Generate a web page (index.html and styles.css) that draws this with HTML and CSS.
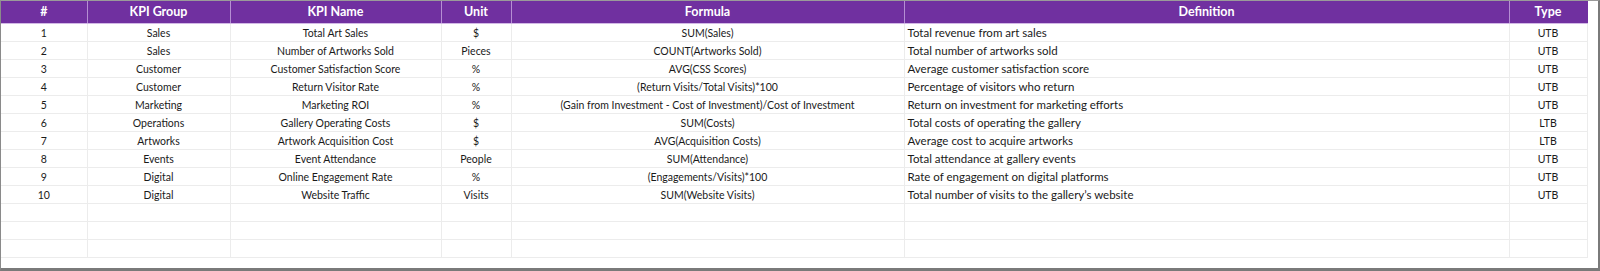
FILE: index.html
```html
<!DOCTYPE html>
<html>
<head>
<meta charset="utf-8">
<link rel="stylesheet" href="styles.css">
</head>
<body>
<div class="frame">
<table class="kpi">
<colgroup>
<col class="c-num"><col class="c-group"><col class="c-name"><col class="c-unit"><col class="c-formula"><col class="c-def"><col class="c-type">
</colgroup>
<thead>
<tr><th>#</th><th>KPI Group</th><th>KPI Name</th><th>Unit</th><th>Formula</th><th>Definition</th><th>Type</th></tr>
</thead>
<tbody>
<tr><td>1</td><td>Sales</td><td>Total Art Sales</td><td>$</td><td>SUM(Sales)</td><td class="def">Total revenue from art sales</td><td>UTB</td></tr>
<tr><td>2</td><td>Sales</td><td>Number of Artworks Sold</td><td>Pieces</td><td>COUNT(Artworks Sold)</td><td class="def">Total number of artworks sold</td><td>UTB</td></tr>
<tr><td>3</td><td>Customer</td><td>Customer Satisfaction Score</td><td>%</td><td>AVG(CSS Scores)</td><td class="def">Average customer satisfaction score</td><td>UTB</td></tr>
<tr><td>4</td><td>Customer</td><td>Return Visitor Rate</td><td>%</td><td>(Return Visits/Total Visits)*100</td><td class="def">Percentage of visitors who return</td><td>UTB</td></tr>
<tr><td>5</td><td>Marketing</td><td>Marketing ROI</td><td>%</td><td>(Gain from Investment - Cost of Investment)/Cost of Investment</td><td class="def">Return on investment for marketing efforts</td><td>UTB</td></tr>
<tr><td>6</td><td>Operations</td><td>Gallery Operating Costs</td><td>$</td><td>SUM(Costs)</td><td class="def">Total costs of operating the gallery</td><td>LTB</td></tr>
<tr><td>7</td><td>Artworks</td><td>Artwork Acquisition Cost</td><td>$</td><td>AVG(Acquisition Costs)</td><td class="def">Average cost to acquire artworks</td><td>LTB</td></tr>
<tr><td>8</td><td>Events</td><td>Event Attendance</td><td>People</td><td>SUM(Attendance)</td><td class="def">Total attendance at gallery events</td><td>UTB</td></tr>
<tr><td>9</td><td>Digital</td><td>Online Engagement Rate</td><td>%</td><td>(Engagements/Visits)*100</td><td class="def">Rate of engagement on digital platforms</td><td>UTB</td></tr>
<tr><td>10</td><td>Digital</td><td>Website Traffic</td><td>Visits</td><td>SUM(Website Visits)</td><td class="def">Total number of visits to the gallery’s website</td><td>UTB</td></tr>
<tr class="blank"><td></td><td></td><td></td><td></td><td></td><td class="def"></td><td></td></tr>
<tr class="blank"><td></td><td></td><td></td><td></td><td></td><td class="def"></td><td></td></tr>
<tr class="blank"><td></td><td></td><td></td><td></td><td></td><td class="def"></td><td></td></tr>
</tbody>
</table>
</div>
</body>
</html>
```

FILE: styles.css
```css
html, body {
  margin: 0;
  padding: 0;
  background: #ffffff;
}

.frame {
  width: 1600px;
  height: 271px;
  box-sizing: border-box;
  border-top: 1px solid #9a9a9a;
  border-left: 1px solid #8a8a8a;
  border-right: 2px solid #7a7a7a;
  border-bottom: 3px solid #7a7a7a;
  background: #ffffff;
}

.kpi {
  border-collapse: collapse;
  table-layout: fixed;
  width: 1586px;
  font-family: Lato, Roboto, "Liberation Sans", sans-serif;
  font-size: 10.5px;
  color: #1a1a1a;
}

.c-num { width: 86px; }
.c-group { width: 143px; }
.c-name { width: 211px; }
.c-unit { width: 70px; }
.c-formula { width: 393px; }
.c-def { width: 605px; }
.c-type { width: 78px; }

.kpi th {
  height: 22px;
  box-sizing: border-box;
  padding: 0;
  background: #7030a0;
  color: #ffffff;
  font-weight: 700;
  font-size: 12.5px;
  text-align: center;
  border-right: 1px solid #b58ed3;
  border-bottom: 1px solid #d2b8e6;
}

.kpi th:last-child {
  border-right: 1px solid #7030a0;
}

.kpi td {
  height: 18px;
  padding: 1px 0 0;
  box-sizing: border-box;
  text-align: center;
  white-space: nowrap;
  overflow: hidden;
  border-right: 1px solid #ececec;
  border-bottom: 1px solid #ececec;
}

.kpi td.def {
  text-align: left;
  padding-left: 3px;
  font-size: 11.5px;
}
```
